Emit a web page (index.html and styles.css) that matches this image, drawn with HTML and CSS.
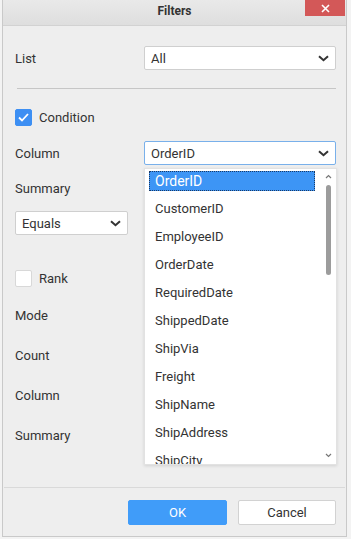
FILE: index.html
```html
<!DOCTYPE html>
<html lang="en">
<head>
    <meta charset="UTF-8">
    <meta name="viewport" content="width=device-width, initial-scale=1.0">
    <title>Filters</title>
    <link rel="stylesheet" href="styles.css">
</head>
<body>
    <div class="dialog">
        <!-- Title bar -->
        <div class="titlebar">
            <span class="title">Filters</span>
            <div class="close">
                <svg width="9" height="9" viewBox="0 0 9 9"><path d="M1 1L8 8M8 1L1 8" stroke="#fff" stroke-width="1.6"/></svg>
            </div>
        </div>

        <div class="content">
            <div class="row row-list">
                <span class="label">List</span>
                <div class="select wide">
                    <span>All</span>
                    <svg class="chevron" width="11" height="7" viewBox="0 0 11 7"><path d="M1 1.2L5.5 5.2L10 1.2" fill="none" stroke="#333" stroke-width="2"/></svg>
                </div>
            </div>

            <div class="divider"></div>

            <div class="check-row">
                <div class="checkbox checked">
                    <svg width="11" height="9" viewBox="0 0 11 9"><path d="M1 4.5L4 7.5L10 1" fill="none" stroke="#fff" stroke-width="1.8"/></svg>
                </div>
                <span class="label">Condition</span>
            </div>

            <div class="row row-column">
                <span class="label">Column</span>
                <div class="select wide focused">
                    <span>OrderID</span>
                    <svg class="chevron" width="11" height="7" viewBox="0 0 11 7"><path d="M1 1.2L5.5 5.2L10 1.2" fill="none" stroke="#333" stroke-width="2"/></svg>

                    <!-- Open dropdown -->
                    <div class="popup">
                        <ul class="options">
                            <li class="active"><span>OrderID</span></li>
                            <li>CustomerID</li>
                            <li>EmployeeID</li>
                            <li>OrderDate</li>
                            <li>RequiredDate</li>
                            <li>ShippedDate</li>
                            <li>ShipVia</li>
                            <li>Freight</li>
                            <li>ShipName</li>
                            <li>ShipAddress</li>
                            <li>ShipCity</li>
                        </ul>
                        <div class="scrollbar">
                            <svg class="arrow-up" width="7" height="5" viewBox="0 0 7 5"><path d="M1 4L3.5 1.5L6 4" fill="none" stroke="#777" stroke-width="1.2"/></svg>
                            <div class="thumb"></div>
                            <svg class="arrow-down" width="7" height="5" viewBox="0 0 7 5"><path d="M1 1L3.5 3.5L6 1" fill="none" stroke="#777" stroke-width="1.2"/></svg>
                        </div>
                    </div>
                </div>
            </div>

            <div class="text-row summary-row"><span class="label">Summary</span></div>

            <div class="equals-row">
                <div class="select narrow">
                    <span>Equals</span>
                    <svg class="chevron" width="11" height="7" viewBox="0 0 11 7"><path d="M1 1.2L5.5 5.2L10 1.2" fill="none" stroke="#333" stroke-width="2"/></svg>
                </div>
            </div>

            <div class="check-row rank-row">
                <div class="checkbox"></div>
                <span class="label">Rank</span>
            </div>

            <div class="text-row mode-row"><span class="label">Mode</span></div>
            <div class="text-row"><span class="label">Count</span></div>
            <div class="text-row"><span class="label">Column</span></div>
            <div class="text-row"><span class="label">Summary</span></div>
        </div>

        <div class="footer">
            <button class="btn btn-ok">OK</button>
            <button class="btn btn-cancel">Cancel</button>
        </div>
    </div>
</body>
</html>
```

FILE: styles.css
```css
html, body {
    margin: 0;
    padding: 0;
}

body {
    font-family: Roboto, "Liberation Sans", Arial, sans-serif;
    font-size: 13px;
    color: #333333;
    background-color: #f3f3f3;
}

.dialog {
    width: 343px;
    height: 536px;
    margin-left: 2px;
    border: 1px solid #c9c9c9;
    border-top: none;
    background-color: #eeeeee;
    display: flex;
    flex-direction: column;
    position: relative;
}

.titlebar {
    height: 25px;
    border-bottom: 1px solid #d2d2d2;
    background: linear-gradient(#e9e9e9, #dedede);
    display: flex;
    align-items: center;
    justify-content: center;
    position: relative;
}

.title {
    font-weight: bold;
    font-size: 12px;
    color: #333333;
    margin-top: -3px;
}

.close {
    position: absolute;
    top: 0;
    right: 1px;
    width: 40px;
    height: 16px;
    background-color: #d35858;
    display: flex;
    align-items: center;
    justify-content: center;
}

.content {
    flex: 1;
    padding: 20px 10px 0 12px;
}

.row {
    display: flex;
    align-items: center;
    justify-content: space-between;
    height: 24px;
}

.label {
    color: #333333;
}

.select {
    height: 22px;
    background-color: #ffffff;
    border: 1px solid #cfcfcf;
    border-radius: 2px;
    display: flex;
    align-items: center;
    justify-content: space-between;
    padding: 0 6px;
    position: relative;
}

.select.wide {
    width: 178px;
}

.select.narrow {
    width: 99px;
}

.select.focused {
    border-color: #79b0ea;
}

.divider {
    height: 1px;
    background-color: #c6c6c6;
    margin: 18px 0 20px 2px;
}

.check-row {
    display: flex;
    align-items: center;
    gap: 7px;
    height: 17px;
}

.checkbox {
    width: 15px;
    height: 15px;
    border: 1px solid #d8d8d8;
    border-radius: 2px;
    background-color: #ffffff;
    display: flex;
    align-items: center;
    justify-content: center;
}

.checkbox.checked {
    background-color: #3d8ff3;
    border-color: #3d8ff3;
}

.row-column {
    margin-top: 15px;
}

.text-row {
    height: 20px;
    display: flex;
    align-items: center;
    margin-top: 20px;
}

.summary-row {
    margin-top: 13px;
}

.equals-row {
    margin-top: 13px;
}

.rank-row {
    margin-top: 35px;
}

.mode-row {
    margin-top: 18px;
}

/* dropdown popup */
.popup {
    position: absolute;
    top: 26px;
    left: -1px;
    width: 191px;
    height: 295px;
    background-color: #ffffff;
    border: 1px solid #e2e2e2;
    box-shadow: 0 1px 3px rgba(0, 0, 0, 0.12);
    overflow: hidden;
    z-index: 5;
}

.options {
    list-style: none;
    margin: 0;
    padding: 2px 0 0 0;
}

.options li {
    height: 28px;
    line-height: 28px;
    padding-left: 10px;
    color: #333333;
}

.options li.active {
    height: 20px;
    line-height: 18px;
    padding-left: 4px;
    margin-bottom: 4px;
}

.options li.active span {
    display: block;
    width: 159px;
    height: 18px;
    padding-left: 5px;
    background-color: #3d95f5;
    color: #ffffff;
    border: 1px dotted #1a3a66;
    font-size: 14px;
}

.scrollbar {
    position: absolute;
    top: 0;
    right: 0;
    width: 16px;
    height: 100%;
}

.arrow-up {
    position: absolute;
    top: 5px;
    left: 5px;
}

.thumb {
    position: absolute;
    top: 16px;
    left: 6px;
    width: 5px;
    height: 90px;
    border-radius: 3px;
    background-color: #9c9c9c;
}

.arrow-down {
    position: absolute;
    bottom: 6px;
    left: 5px;
}

.footer {
    border-top: 1px solid #d9d9d9;
    margin: 0 1px;
    padding: 12px 9px 10px 0;
    display: flex;
    justify-content: flex-end;
    gap: 11px;
    height: 26px;
}

.btn {
    font-family: Roboto, "Liberation Sans", Arial, sans-serif;
    font-size: 13px;
    height: 25px;
    border-radius: 2px;
    cursor: pointer;
}

.btn-ok {
    width: 99px;
    background-color: #409cf9;
    border: 1px solid #409cf9;
    color: #ffffff;
}

.btn-cancel {
    width: 98px;
    background-color: #ffffff;
    border: 1px solid #d2d2d2;
    color: #333333;
}
```
